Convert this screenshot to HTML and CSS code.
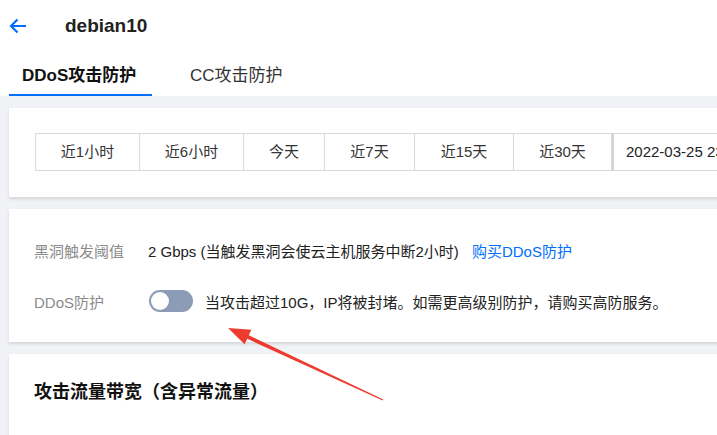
FILE: index.html
```html
<!DOCTYPE html>
<html lang="zh-CN">

<head>
    <meta charset="UTF-8">
    <title>debian10 - DDoS攻击防护</title>
    <link rel="stylesheet" href="styles.css">
</head>

<body>

    <div class="page">
        <!-- Header -->
        <div class="topbar">
            <div class="head">
                <svg class="back" width="18" height="16" viewBox="0 0 18 16">
                    <path d="M17 8H2M8.5 1.5L2 8l6.5 6.5" fill="none" stroke="#006eff" stroke-width="2.2" />
                </svg>
                <h1 class="title">debian10</h1>
            </div>
            <div class="tabs">
                <div class="tab active">DDoS攻击防护</div>
                <div class="tab">CC攻击防护</div>
            </div>
        </div>

        <div class="content">
            <!-- Time range -->
            <div class="card card-time">
                <div class="range">
                    <div class="range-btn w105">近1小时</div>
                    <div class="range-btn w105">近6小时</div>
                    <div class="range-btn w82">今天</div>
                    <div class="range-btn w91">近7天</div>
                    <div class="range-btn w100">近15天</div>
                    <div class="range-btn w99">近30天</div>
                    <div class="range-date">2022-03-25 23:00:00 ~ 2022-03-26 00:00:00</div>
                </div>
            </div>

            <!-- Protection info -->
            <div class="card card-info">
                <div class="row">
                    <span class="label">黑洞触发阈值</span>
                    <span class="value">2 Gbps (当触发黑洞会使云主机服务中断2小时)</span>
                    <a class="link" href="#">购买DDoS防护</a>
                </div>
                <div class="row">
                    <span class="label">DDoS防护</span>
                    <span class="switch"><span class="knob"></span></span>
                    <span class="value">当攻击超过10G，IP将被封堵。如需更高级别防护，请购买高防服务。</span>
                </div>
            </div>

            <!-- Chart -->
            <div class="card card-chart">
                <h3 class="section-title">攻击流量带宽（含异常流量）</h3>
            </div>
        </div>

        <!-- annotation arrow -->
        <svg class="mark" width="717" height="435" viewBox="0 0 717 435">
            <polygon fill="#ee3b2f"
                points="228,328 251.4,329.7 248.8,335.2 383.3,399.6 382.7,400.4 247.2,338.8 244.6,344.3" />
        </svg>
    </div>

</body>

</html>
```

FILE: styles.css
```css
* {
    padding: 0;
    margin: 0;
    box-sizing: border-box;
    font-family: "Liberation Sans", "Noto Sans CJK SC", sans-serif;
}

html,
body {
    width: 717px;
    height: 435px;
    overflow: hidden;
    background-color: #f1f2f5;
}

.page {
    position: relative;
    width: 1000px;
    height: 435px;
}

.topbar {
    background-color: white;
    height: 96px;
}

.head {
    display: flex;
    align-items: center;
    height: 52px;
    padding-left: 9px;
}

.back {
    display: block;
}

.title {
    margin-left: 38px;
    font-size: 19px;
    font-weight: bold;
    color: #222;
}

.tabs {
    display: flex;
    padding-left: 9px;
    height: 44px;
}

.tab {
    font-size: 17px;
    color: #333;
    line-height: 48px;
    height: 44px;
    padding: 0 13px;
    border-bottom: 2px solid transparent;
}

.tab.active {
    font-weight: bold;
    color: #111;
    border-bottom-color: #006eff;
    width: 143px;
    margin-right: 25px;
}

.content {
    padding: 12px 0 0 9px;
    display: flex;
    flex-direction: column;
    gap: 12px;
}

.card {
    background-color: white;
    box-shadow: rgba(0, 0, 0, 0.12) 0px 2px 3px;
}

.card-time {
    height: 89px;
    padding: 25px 26px;
}

.range {
    display: flex;
    height: 38px;
}

.range-btn,
.range-date {
    border: 1px solid #d9d9d9;
    margin-left: -1px;
    font-size: 15px;
    color: #333;
    line-height: 36px;
    text-align: center;
}

.range-btn:first-child {
    margin-left: 0;
}

.w105 { width: 105px; }
.w82 { width: 82px; }
.w91 { width: 91px; }
.w100 { width: 100px; }
.w99 { width: 99px; }

.range-date {
    margin-left: 0;
    border-left: 2px solid #d3d3d3;
    padding-left: 12px;
    text-align: left;
    width: 360px;
    color: #222;
}

.card-info {
    height: 133px;
    padding: 28px 25px 0;
}

.row {
    display: flex;
    align-items: center;
    height: 26px;
    margin-bottom: 25px;
    font-size: 15px;
}

.label {
    width: 114px;
    color: #8b8b8b;
}

.value {
    color: #222;
}

.link {
    margin-left: 13px;
    color: #006eff;
    text-decoration: none;
}

.switch {
    position: relative;
    width: 44px;
    height: 22px;
    border-radius: 11px;
    background-color: #8c9cb6;
    margin-right: 12px;
    margin-left: 1px;
}

.knob {
    position: absolute;
    top: 2px;
    left: 2px;
    width: 18px;
    height: 18px;
    border-radius: 50%;
    background-color: white;
}

.card-chart {
    height: 120px;
    padding: 23px 25px;
}

.section-title {
    font-size: 18px;
    font-weight: bold;
    color: #111;
}

.mark {
    position: absolute;
    left: 0;
    top: 0;
    pointer-events: none;
}
```
